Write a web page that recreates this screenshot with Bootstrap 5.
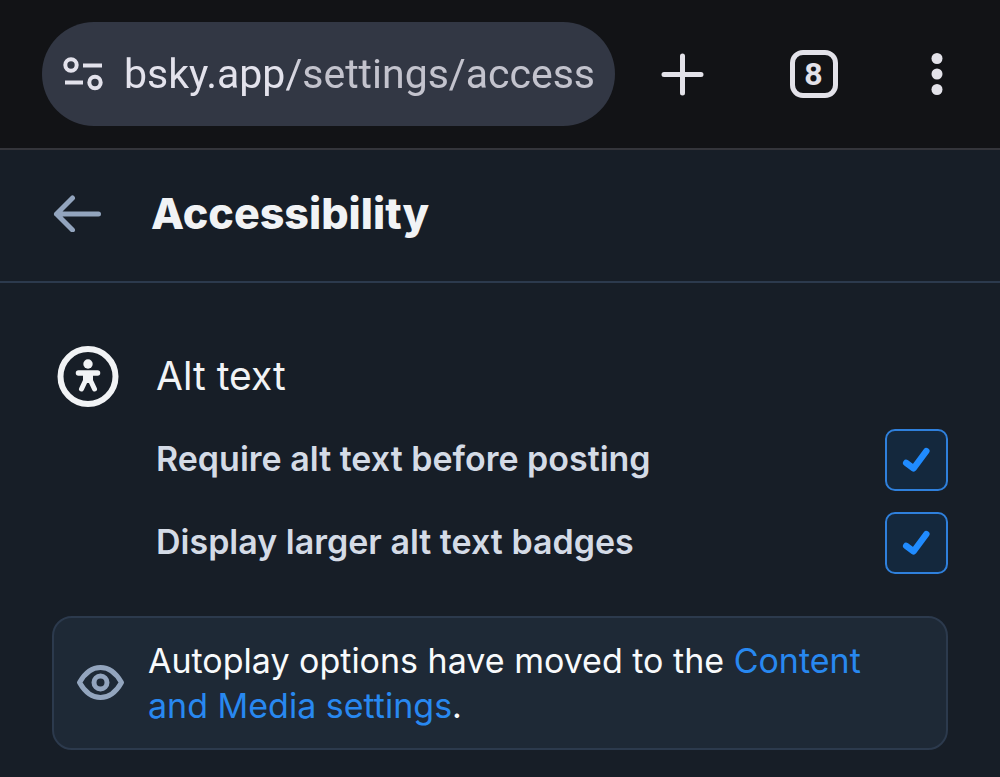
<!DOCTYPE html>
<html lang="en" data-bs-theme="dark">
<head>
<meta charset="utf-8">
<meta name="viewport" content="width=device-width, initial-scale=1">
<title>Accessibility settings</title>
<link href="https://cdn.jsdelivr.net/npm/bootstrap@5.3.0/dist/css/bootstrap.min.css" rel="stylesheet">
<style>
  body { background: #171e27; color: #f1f3f5; font-family: Inter, sans-serif; }
  svg { display: block; flex: none; }
  .plain-btn { border: 0; background: none; padding: 0; color: inherit; display: block; }

  .browser-bar { background: #121316; color: #e3e2e9; border-bottom: 2px solid #34353b; padding: 22px 49px 22px 42px; }
  .address { background: #323744; border-radius: 52px; height: 104px; padding: 0 18px 0 21px; flex: 0 1 573px; min-width: 0; gap: 21px; }
  .address input {
    flex: 1 1 0; min-width: 0; padding: 0; border: 0; outline: 0; background: none; color: #e3e2ec;
    font-family: Roboto, sans-serif; font-size: 41px; line-height: 56px;
    -webkit-mask-image: linear-gradient(90deg, #000 164px, rgba(0,0,0,.82) 178px);
    mask-image: linear-gradient(90deg, #000 164px, rgba(0,0,0,.82) 178px);
  }
  .bar-actions { flex: 1 1 0; padding-left: 46px; }
  .tab-count { width: 48px; height: 48px; border: 5px solid #e3e2e9; border-radius: 13px; font: 700 32px/38px Roboto, sans-serif; text-align: center; }

  .page-head { border-bottom: 2px solid #2c3a4d; padding: 31px 52px 36px; gap: 49px; }
  .page-head h1 { font-size: 43px; line-height: 64px; font-weight: 800; color: #f1f3f5; }
  .back { color: #93a5be; }

  .settings { padding: 62px 52px 27px; }
  .group-head { padding-left: 5px; gap: 37px; margin-bottom: 22px; }
  .group-head h2 { font-size: 39px; line-height: 62px; font-weight: 400; color: #f1f3f5; }
  .options { padding-left: 104px; gap: 21px; margin-bottom: 42px; }
  .options label { font-size: 34px; line-height: 60px; font-weight: 600; color: #d4dbe6; }
  .options .form-check-input {
    width: 63px; height: 62px; margin: 0; flex: none; border: 2px solid #2f80dc; border-radius: 10px;
    background-color: #14283d;
  }
  .options .form-check-input:checked {
    background-color: #14283d; border-color: #2f80dc; background-size: 100% 100%;
    background-origin: border-box;
    background-image: url("data:image/svg+xml,%3Csvg xmlns='http://www.w3.org/2000/svg' viewBox='0 0 63 63'%3E%3Cpath d='M21 34.500l7.500 5.500L41.500 22.500' fill='none' stroke='%23208bfe' stroke-width='6.500' stroke-linecap='round' stroke-linejoin='round'/%3E%3C/svg%3E");
  }
  .notice { background: #1e2936; border: 2px solid #2c3a4d; border-radius: 20px; padding: 20px 24px 20px 22px; gap: 23px; }
  .notice p { font-size: 34px; line-height: 45px; color: #f8fafc; }
  .notice a { color: #2888f0; text-decoration: none; }
  .notice svg { color: #93a5be; }
</style>
</head>
<body>
<nav class="browser-bar d-flex align-items-center" aria-label="Browser">
  <div class="address d-flex align-items-center">
    <button class="plain-btn" type="button" aria-label="Site information">
      <svg width="40" height="34" viewBox="0 0 40 34" fill="none" stroke="#e3e2ec" stroke-width="4">
        <circle cx="8" cy="8" r="5.700"/><path d="M20 8.500H39M2 25.500H20"/><circle cx="32" cy="25.500" r="5.700"/>
      </svg>
    </button>
    <input type="text" aria-label="Address" value="bsky.app/settings/access" spellcheck="false">
  </div>
  <div class="bar-actions d-flex align-items-center justify-content-between">
    <button class="plain-btn" type="button" aria-label="New tab">
      <svg width="43" height="43" viewBox="0 0 43 43" stroke="#e3e2e9" stroke-width="5" stroke-linecap="round"><path d="M21.500 3v37M3 21.500h37"/></svg>
    </button>
    <button class="plain-btn tab-count" type="button" aria-label="8 open tabs">8</button>
    <button class="plain-btn" type="button" aria-label="Menu">
      <svg width="28" height="44" viewBox="0 0 28 44" fill="#e3e2e9"><circle cx="14" cy="6.500" r="5.500"/><circle cx="14" cy="22" r="5.500"/><circle cx="14" cy="37.500" r="5.500"/></svg>
    </button>
  </div>
</nav>

<header class="page-head d-flex align-items-center">
  <button class="plain-btn back" type="button" aria-label="Go back">
    <svg width="50" height="38" viewBox="0 0 50 38" fill="none" stroke="currentColor" stroke-width="5" stroke-linecap="round" stroke-linejoin="round"><path d="M20.500 4L4.500 20l16 16M4.500 20h42"/></svg>
  </button>
  <h1 class="m-0">Accessibility</h1>
</header>

<main class="settings">
  <div class="group-head d-flex align-items-center">
    <svg width="62" height="62" viewBox="0 0 62 62">
      <circle cx="31" cy="31.500" r="27.500" fill="none" stroke="#f1f3f5" stroke-width="6"/>
      <circle cx="31" cy="19" r="4.700" fill="#f1f3f5"/>
      <path d="M21.500 28h19" fill="none" stroke="#f1f3f5" stroke-width="5.500" stroke-linecap="round"/>
      <path d="M28.500 28.500v7L24.500 44M33.500 28.500v7L37.500 44" fill="none" stroke="#f1f3f5" stroke-width="5" stroke-linecap="round" stroke-linejoin="round"/>
      <path d="M28 28h6v10h-6z" fill="#f1f3f5"/>
    </svg>
    <h2 class="m-0">Alt text</h2>
  </div>
  <div class="options d-flex flex-column">
    <div class="d-flex align-items-start justify-content-between">
      <label for="requireAlt">Require alt text before posting</label>
      <input class="form-check-input" type="checkbox" id="requireAlt" checked>
    </div>
    <div class="d-flex align-items-start justify-content-between">
      <label for="largeBadges">Display larger alt text badges</label>
      <input class="form-check-input" type="checkbox" id="largeBadges" checked>
    </div>
  </div>
  <div class="notice d-flex align-items-center">
    <svg width="49" height="38" viewBox="0 0 49 38" fill="none" stroke="currentColor" stroke-width="5" stroke-linejoin="round">
      <path d="M3.500 18.500Q12 3.500 24.500 3.500T45.500 18.500Q37 33.500 24.500 33.500T3.500 18.500Z"/><circle cx="24.500" cy="18.500" r="6.500"/>
    </svg>
    <p class="m-0">Autoplay options have moved to the <a href="#content-and-media">Content and Media settings</a>.</p>
  </div>
</main>
<script src="https://cdn.jsdelivr.net/npm/bootstrap@5.3.0/dist/js/bootstrap.bundle.min.js"></script>
</body>
</html>
